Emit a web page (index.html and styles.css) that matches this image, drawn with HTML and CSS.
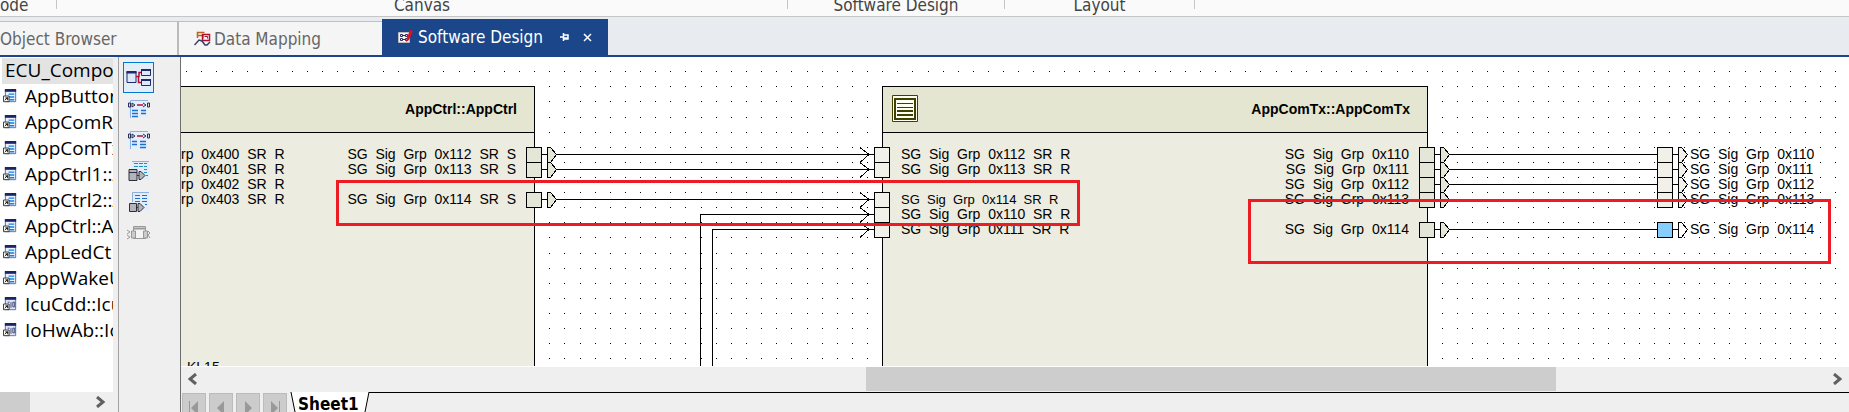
FILE: index.html
```html
<!DOCTYPE html>
<html lang="en">
<head>
<meta charset="utf-8">
<title>Software Design</title>
<link rel="stylesheet" href="styles.css">
</head>
<body>
<svg class="defs" aria-hidden="true">
  <symbol id="port-out" viewBox="0 0 32 16">
    <path class="box" d="M.5 .5h15v15h-15z"/>
    <path class="line" d="M16 7.5h5"/>
    <path class="box" d="M21.5 .5h3l6 7-6 8h-3z"/>
  </symbol>
  <symbol id="port-in" viewBox="0 0 30 16">
    <path class="line" d="M0 7.5h14"/>
    <path class="line" d="M0 .5l9 7-9 8"/>
    <path class="box" d="M14.5 .5h15v15h-15z"/>
  </symbol>
  <symbol id="ic-comp" viewBox="0 0 16 16">
    <path d="M2 0h12v13H2z" fill="#e8f2ff"/>
    <path d="M2.500 .5h11v13h-11z" fill="none" stroke="#5a6e9c"/>
    <path d="M2 0h12v3H2z" fill="#1c2468"/>
    <path d="M6 5.500h6M6 8.500h6M7 11.500h5" stroke="#1a80e0" stroke-width="1.500"/>
    <path d="M.5 7.500h6v6h-6z" fill="#fff" stroke="#333"/>
    <path d="M2 12l3-3M2.500 9.500H5V12" fill="none" stroke="#000"/>
  </symbol>
  <symbol id="ic-mod" viewBox="0 0 16 16">
    <path d="M2 0h12v13H2z" fill="#dfe6fa"/>
    <path d="M2.500 .5h11v13h-11z" fill="none" stroke="#5a6e9c"/>
    <path d="M2 0h12v3H2z" fill="#1c2468"/>
    <path d="M8.500 5.500v6M10.500 5.500h2v5h-2zM5 5.500h2" fill="none" stroke="#39406e"/>
    <path d="M.5 7.500h6v6h-6z" fill="#fff" stroke="#333"/>
    <path d="M2 12l3-3M2.500 9.500H5V12" fill="none" stroke="#000"/>
  </symbol>
  <symbol id="sheet" viewBox="0 0 22 18">
    <path d="M0 0h20v18H0z" fill="#e4eefc"/><path d="M2.500 18V.5H20" fill="none" stroke="#8fb0dc"/>
  </symbol>
</svg>

<header class="ribbon">
  <div class="group g-mode"><span>ode</span></div>
  <div class="group g-canvas"><span>Canvas</span></div>
  <div class="group g-design"><span>Software Design</span></div>
  <div class="group g-layout"><span>Layout</span></div>
</header>

<nav class="tabs">
  <button class="tab t-browser">Object Browser</button>
  <button class="tab t-map">
    <svg width="17" height="16" viewBox="0 0 17 16" fill="none"><path d="M3.500 7V1.500h7M4 4.500h5v3" stroke="#b8651b" stroke-width="1.500"/><path d="M8.500 3.500h7v6h-7z" stroke="#b01030" stroke-width="1.500"/><path d="M10.500 5.500h3v2" stroke="#b01030"/><path d="M.5 14l4.500-5 3 1 3 4 2 0 3-3" stroke="#3a3f66" stroke-width="1.500"/></svg>
    <span>Data Mapping</span>
  </button>
  <button class="tab t-active">
    <svg width="16" height="16" viewBox="0 0 16 16"><path d="M.5 3.500h11v10H.5z" fill="#f2f2f2" stroke="#bbb"/><path d="M2.500 5.500h2v2h-2zM2.500 9.500h2v2h-2zM7.500 5.500h2v2h-2zM7.500 9.500h2v2h-2z" fill="none" stroke="#282c5c"/><path d="M5 6.500h2M5 10.500h2" stroke="#282c5c"/><path d="M12 1l3 1-4 9-3 2 .5-3z" fill="#e01020"/></svg>
    <span class="grow">Software Design</span>
    <svg width="9" height="8" viewBox="0 0 9 8"><path d="M0 4h3M3.500 0v8M4 2h4v4H4M4 5h4" fill="none" stroke="#fff" stroke-width="1.500"/></svg>
    <svg class="close" width="9" height="9" viewBox="0 0 9 9"><path d="M1 1l7 7M8 1L1 8" stroke="#fff" stroke-width="1.500"/></svg>
  </button>
</nav>

<main class="work">
  <aside class="browser">
    <ul class="tree">
      <li class="root">ECU_Compos</li>
      <li><svg class="ic"><use href="#ic-comp"/></svg>AppButton</li>
      <li><svg class="ic"><use href="#ic-comp"/></svg>AppComR</li>
      <li><svg class="ic"><use href="#ic-comp"/></svg>AppComTx</li>
      <li><svg class="ic"><use href="#ic-comp"/></svg>AppCtrl1::A</li>
      <li><svg class="ic"><use href="#ic-comp"/></svg>AppCtrl2::A</li>
      <li><svg class="ic"><use href="#ic-comp"/></svg>AppCtrl::A</li>
      <li><svg class="ic"><use href="#ic-comp"/></svg>AppLedCt</li>
      <li><svg class="ic"><use href="#ic-comp"/></svg>AppWakeU</li>
      <li><svg class="ic"><use href="#ic-mod"/></svg>IcuCdd::Icu</li>
      <li><svg class="ic"><use href="#ic-mod"/></svg>IoHwAb::Io</li>
    </ul>
    <div class="tree-scroll">
      <div class="tree-thumb"></div>
      <button class="arrow" aria-label="Scroll right"><svg width="10" height="12" viewBox="0 0 10 12"><path d="M1 1l6 5-6 5" class="chevron"/></svg></button>
    </div>
  </aside>

  <div class="tools">
    <button class="tool on" aria-label="Composition view"><svg width="26" height="20" viewBox="0 0 26 20"><path d="M1 3.500h9v11H1zM15.500 1.500h9v6h-9zM15.500 11.500h9v6h-9z" fill="#dce8fa" stroke="#1f2a6c"/><path d="M.5 3h10v2.500H.5zM15 1h10v2H15zM15 11h10v2H15z" fill="#1f2a6c"/><path d="M10 8.500h3v-4h2M12.500 8.500v6H15" fill="none" stroke="#b01030" stroke-width="1.500"/></svg></button>
    <button class="tool" aria-label="Sender mapping"><svg width="22" height="18" viewBox="0 0 22 18"><use href="#sheet" width="22" height="18"/><path d="M.5 3h2v4h-2zM4 3l3 2-3 2zM21.500 3h-2v4h2zM15 3l3 2-3 2" fill="#ddd" stroke="#2c2f55"/><path d="M9 5h6" stroke="#b01030" stroke-width="1.500"/><path d="M4 10.500h6M4 13.500h6M4 16.500h6M13 10.500h5M13 13.500h5" stroke="#1a70d0" stroke-width="1.500"/></svg></button>
    <button class="tool" aria-label="Receiver mapping"><svg width="22" height="18" viewBox="0 0 22 18"><use href="#sheet" width="22" height="18"/><path d="M.5 3h2v4h-2zM4 3l3 2-3 2zM21.500 3h-2v4h2zM15 3l3 2-3 2" fill="#ddd" stroke="#2c2f55"/><path d="M9 5h6" stroke="#b01030" stroke-width="1.500"/><path d="M4 10.500h5M4 13.500h5M12 10.500h6M12 13.500h6M12 16.500h6" stroke="#1a70d0" stroke-width="1.500"/></svg></button>
    <button class="tool" aria-label="Port table"><svg width="22" height="20" viewBox="0 0 22 20"><path d="M4 0h17v18H4z" fill="#e0ecfa"/><path d="M4 .5h17" stroke="#8fb0dc"/><path d="M6 2.500h13M6 5.500h13M16 8.500h3M16 11.500h3M18 14.500h2" stroke="#2090b8" stroke-dasharray="4 1"/><path d="M1 8.500h8v11H1zM1 11.500h8M11 10.500h2l4 4-4 4h-2zM9 14.500h2" fill="#b4b4b8" stroke="#2c2f40"/></svg></button>
    <button class="tool" aria-label="Port sheet"><svg width="22" height="20" viewBox="0 0 22 20"><path d="M4 0h17v18H4z" fill="#e0ecfa"/><path d="M4.500 10V.5H21" fill="none" stroke="#8fb0dc"/><path d="M7 3.500h5M7 6.500h5M7 9.500h5M14 3.500h5M14 6.500h5M14 9.500h5M17 12.500h2" stroke="#1a70d0"/><path d="M1.500 11.500h7v8h-7zM10 11.500h2l4 4-4 4h-2zM8.500 15.500H10" fill="#b4b4b8" stroke="#2c2f40"/></svg></button>
    <button class="tool" aria-label="Component ports" disabled><svg width="24" height="16" viewBox="0 0 24 16"><path d="M6.500 1.500h12v12h-12z" fill="#f4f4f4" stroke="#999"/><path d="M6 3.500h13" stroke="#999" stroke-width="2"/><path d="M4.500 6v7h4V6zM16.500 6v7h4V6z" fill="#ccc" stroke="#999"/><path d="M0 5l3 2-3 2M0 10l3 2-3 2M21 6l2 2-2 2 2 3" fill="none" stroke="#999"/></svg></button>
  </div>

  <section class="design">
    <div class="canvas">
      <svg class="wires" aria-label="Connections">
        <path id="grid" class="dots"/>
        <path class="line" d="M376 97.500h303M376 112.500h303M376 142.500h303M679 157.500H519.500V312M679 172.500H531.500V312M1269 97.500h207M1269 112.500h207M1269 127.500h207M1269 142.500h207M1269 172.500h207"/>
      </svg>

      <article class="component ctrl">
        <h2 class="title">AppCtrl::AppCtrl</h2>
        <div class="ports">
          <ul class="side clipped">
            <li>rp  0x400  SR  R</li>
            <li>rp  0x401  SR  R</li>
            <li>rp  0x402  SR  R</li>
            <li>rp  0x403  SR  R</li>
          </ul>
          <ul class="side out">
            <li><span class="label">SG  Sig  Grp  0x112  SR  S</span><svg class="p-out"><use href="#port-out"/></svg></li>
            <li><span class="label">SG  Sig  Grp  0x113  SR  S</span><svg class="p-out"><use href="#port-out"/></svg></li>
            <li class="skip"><span class="label">SG  Sig  Grp  0x114  SR  S</span><svg class="p-out"><use href="#port-out"/></svg></li>
          </ul>
        </div>
        <p class="more">KL15</p>
      </article>

      <article class="component comtx">
        <h2 class="title">
          <svg width="26" height="27" viewBox="0 0 26 27"><path d="M.5 .5h25v26H.5z" fill="#fffff4" stroke="#404000"/><path d="M3 4h20v20H3z" fill="none" stroke="#404000" stroke-width="2"/><path d="M5 8.500h16M5 12.500h16" stroke="#404000"/><path d="M5 16h16M5 20h16" stroke="#404000" stroke-width="2"/></svg>
          <span>AppComTx::AppComTx</span>
        </h2>
        <div class="ports">
          <ul class="side in">
            <li><svg class="p-in"><use href="#port-in"/></svg><span class="label">SG  Sig  Grp  0x112  SR  R</span></li>
            <li><svg class="p-in"><use href="#port-in"/></svg><span class="label">SG  Sig  Grp  0x113  SR  R</span></li>
            <li class="skip"><svg class="p-in"><use href="#port-in"/></svg><span class="label small">SG  Sig  Grp  0x114  SR  R</span></li>
            <li><svg class="p-in"><use href="#port-in"/></svg><span class="label">SG  Sig  Grp  0x110  SR  R</span></li>
            <li><svg class="p-in"><use href="#port-in"/></svg><span class="label">SG  Sig  Grp  0x111  SR  R</span></li>
          </ul>
          <ul class="side out">
            <li><span class="label">SG  Sig  Grp  0x110</span><svg class="p-out"><use href="#port-out"/></svg></li>
            <li><span class="label">SG  Sig  Grp  0x111</span><svg class="p-out"><use href="#port-out"/></svg></li>
            <li><span class="label">SG  Sig  Grp  0x112</span><svg class="p-out"><use href="#port-out"/></svg></li>
            <li><span class="label">SG  Sig  Grp  0x113</span><svg class="p-out"><use href="#port-out"/></svg></li>
            <li class="skip"><span class="label">SG  Sig  Grp  0x114</span><svg class="p-out"><use href="#port-out"/></svg></li>
          </ul>
        </div>
      </article>

      <ul class="side external">
        <li><svg class="p-out"><use href="#port-out"/></svg><span class="label">SG  Sig  Grp  0x110</span></li>
        <li><svg class="p-out"><use href="#port-out"/></svg><span class="label">SG  Sig  Grp  0x111</span></li>
        <li><svg class="p-out"><use href="#port-out"/></svg><span class="label">SG  Sig  Grp  0x112</span></li>
        <li><svg class="p-out"><use href="#port-out"/></svg><span class="label">SG  Sig  Grp  0x113</span></li>
        <li class="skip"><svg class="p-out"><rect class="selected" x="0" y="0" width="16" height="16"/><use class="see-through" href="#port-out"/></svg><span class="label">SG  Sig  Grp  0x114</span></li>
      </ul>

      <div class="mark mark-a"></div>
      <div class="mark mark-b"></div>
    </div>

    <div class="hscroll">
      <button class="arrow" aria-label="Scroll left"><svg width="10" height="12" viewBox="0 0 10 12"><path d="M8 1L2 6l6 5" class="chevron"/></svg></button>
      <div class="track"><div class="thumb"></div></div>
      <button class="arrow" aria-label="Scroll right"><svg width="10" height="12" viewBox="0 0 10 12"><path d="M2 1l6 5-6 5" class="chevron"/></svg></button>
    </div>

    <footer class="sheets">
      <button class="nav" aria-label="First sheet"><svg width="12" height="14" viewBox="0 0 12 14"><path d="M1 0h1v14H1zM10 0v14L3 7z"/></svg></button>
      <button class="nav" aria-label="Previous sheet"><svg width="12" height="14" viewBox="0 0 12 14"><path d="M9 0v14L2 7z"/></svg></button>
      <button class="nav" aria-label="Next sheet"><svg width="12" height="14" viewBox="0 0 12 14"><path d="M3 0v14l7-7z"/></svg></button>
      <button class="nav" aria-label="Last sheet"><svg width="12" height="14" viewBox="0 0 12 14"><path d="M10 0h1v14h-1zM2 0v14l7-7z"/></svg></button>
      <button class="sheet-tab"><svg class="slant" width="6" height="20" viewBox="0 0 6 20"><path d="M1 0h5v20z" fill="#fff"/><path d="M1 0l4 20" stroke="#000"/></svg><span>Sheet1</span><svg class="slant" width="6" height="20" viewBox="0 0 6 20"><path d="M0 0h5L1 20H0z" fill="#fff"/><path d="M5 0L1 20" stroke="#000"/></svg></button>
      <div class="rest"></div>
    </footer>
  </section>
</main>
<script src="grid.js"></script>
</body>
</html>
```

FILE: styles.css
```css
* { box-sizing: border-box; }
body {
  margin: 0;
  height: 100vh;
  display: flex;
  flex-direction: column;
  overflow: hidden;
  background: #efefef;
  font-family: "DejaVu Sans Condensed", "DejaVu Sans", sans-serif;
  font-stretch: condensed;
  font-size: 17px;
  color: #000;
}
button { margin: 0; padding: 0; border: 0; background: none; font: inherit; color: inherit; }
ul { margin: 0; padding: 0; list-style: none; }
svg { display: block; flex: none; }
.defs { position: absolute; width: 0; height: 0; }

.ribbon {
  flex: none;
  display: flex;
  height: 17px;
  background: #fafafa;
  border-bottom: 1px solid #c6c6c6;
  color: #444;
}
.group {
  display: flex;
  align-items: flex-end;
  justify-content: center;
  height: 9px;
  border-right: 1px solid #c6c6c6;
  line-height: 16px;
  white-space: nowrap;
}
.group span { margin-bottom: -4px; }
.g-mode { width: 57px; justify-content: flex-start; }
.g-canvas { width: 731px; }
.g-design { width: 217px; }
.g-layout { width: 190px; }

.tabs {
  flex: none;
  display: flex;
  align-items: flex-end;
  height: 40px;
  background: #e8ebf0;
  border-bottom: 2px solid #1b478a;
}
.tab {
  display: flex;
  align-items: center;
  height: 34px;
  background: #f5f5f5;
  border-top: 1px solid #c0c0c0;
  color: #666;
  white-space: nowrap;
}
.t-browser { width: 179px; border-right: 2px solid #bbb; }
.t-map { width: 203px; padding-left: 15px; gap: 3px; }
.t-active { width: 226px; height: 36px; padding: 0 16px; gap: 4px; background: #1b478a; border: 0; color: #fff; }
.grow { flex: 1; text-align: left; }
.close { margin-left: 10px; }

.work { flex: 1; min-height: 0; display: flex; }
.browser { flex: none; width: 119px; display: flex; flex-direction: column; background: #fff; border-right: 1px solid #a0a0a0; box-shadow: inset -5px 0 #efefef; padding-right: 5px; }
.tree { flex: 1; min-height: 0; overflow: hidden; padding: 1px 0 0 2px; font: 19px/24px "Open Sans", "Noto Sans", sans-serif; }
.tree li { display: flex; align-items: center; gap: 7px; height: 26px; padding: 0 0 2px 1px; white-space: nowrap; overflow: hidden; }
.tree .root { background: #e3e3e3; padding-left: 3px; }
.ic { width: 15px; height: 15px; }
.tree-scroll { flex: none; height: 20px; display: flex; justify-content: space-between; background: #efefef; }
.tree-thumb { width: 30px; background: #cdcdcd; }
.arrow { width: 24px; display: flex; align-items: center; justify-content: center; }
.chevron { fill: none; stroke: #606060; stroke-width: 3; }

.tools { flex: none; width: 62px; padding: 5px 0 0 4px; border-right: 1px solid #6e6e6e; }
.tool { display: flex; align-items: center; justify-content: center; width: 31px; height: 31px; }
.on { background: #e2edf8; border: 1px solid #0078d7; }

.design { flex: 1; min-width: 0; display: flex; flex-direction: column; }
.canvas {
  position: relative;
  flex: 1;
  min-height: 0;
  overflow: hidden;
  background: #fff;
  border-bottom: 1px solid #fff;
  font: 14px/15px "Liberation Sans", Arial, sans-serif;
  font-stretch: normal;
}
.wires { position: absolute; width: 100%; height: 100%; shape-rendering: crispEdges; }
.dots { fill: #000; }
.line { fill: none; stroke: #000; }
.box { fill: inherit; stroke: #000; }

.component { position: absolute; top: 29px; bottom: 0; background: #ecece0; border: 1px solid #000; border-bottom: 0; }
.ctrl { left: 0; width: 354px; border-left: 0; }
.comtx { left: 701px; width: 546px; }
.title {
  display: flex;
  align-items: center;
  justify-content: space-between;
  height: 46px;
  margin: 0;
  padding: 0 17px 2px 9px;
  background: #e4e6d1;
  border-bottom: 1px solid #000;
  font-size: 14px;
  line-height: 16px;
}
.ctrl .title { justify-content: flex-end; }
.ports { display: flex; justify-content: space-between; padding-top: 14px; }
.side li { display: flex; height: 15px; white-space: pre; }
.side .skip { margin-top: 15px; }
.label { height: 15px; overflow: hidden; }
.small { font-size: 13px; }
.p-out { width: 32px; height: 16px; fill: #e4e6d8; shape-rendering: crispEdges; }
.p-in { width: 30px; height: 16px; fill: #f1f1ea; shape-rendering: crispEdges; }
.out { margin-right: -24px; }
.out li { gap: 10px; justify-content: flex-end; }
.in { margin-left: -23px; }
.in li { gap: 11px; }
.external { position: absolute; left: 1476px; top: 90px; }
.external li { gap: 1px; }
.external .p-out { fill: #f1f1ea; }
.external .selected { fill: #87cefa; }
.external .see-through { fill: transparent; }
.more { position: absolute; left: 6px; bottom: -9px; margin: 0; }

.mark { position: absolute; border: 3px solid #ed1c24; }
.mark-a { left: 155px; top: 123px; width: 744px; height: 46px; }
.mark-b { left: 1067px; top: 142px; width: 583px; height: 65px; }

.hscroll { flex: none; display: flex; height: 25px; padding-bottom: 1px; }
.track { flex: 1; display: flex; }
.thumb { width: 42.6%; margin-left: 40.8%; background: #cdcdcd; }

.sheets { flex: none; display: flex; gap: 3px; height: 20px; padding-left: 1px; overflow: hidden; }
.nav { width: 24px; height: 24px; margin-top: 1px; padding: 5px 5px 0; background: #ccc; border: 1px solid #bbb; fill: #999; }
.sheet-tab { display: flex; font-size: 17px; font-weight: bold; line-height: 24px; }
.sheet-tab span { height: 20px; padding: 0 5px 0 2px; background: #fff; }
.slant { height: 20px; }
.rest { flex: 1; margin-left: -4px; border-top: 1px solid #000; }
```

FILE: grid.js
```js
// Snap grid of the canvas: one single-pixel dot per grid point.
const pitchX = 15.13;
const pitchY = 15.11;
const canvas = document.querySelector(".canvas");
let d = "";
for (let y = 14.7; y < canvas.clientHeight; y += pitchY) {
  for (let x = 5.7; x < canvas.clientWidth; x += pitchX) {
    d += `M${Math.floor(x)} ${Math.floor(y)}h1v1h-1z`;
  }
}
document.getElementById("grid").setAttribute("d", d);
```
